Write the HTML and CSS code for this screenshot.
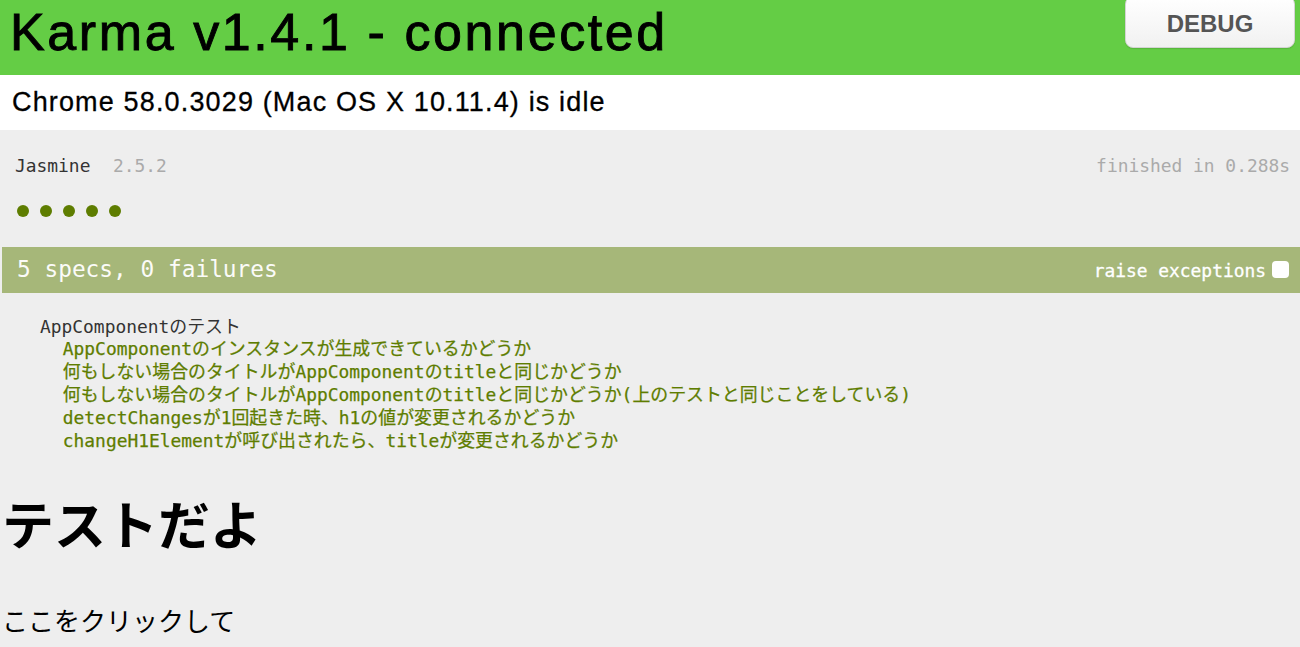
FILE: index.html
```html
<!DOCTYPE html>
<html lang="ja">
<head>
<meta charset="utf-8">
<title>Karma</title>
<link rel="stylesheet" href="styles.css">
</head>
<body>
<header class="banner">
  <h1 class="title">Karma v1.4.1 - connected</h1>
  <button class="debug">DEBUG</button>
</header>
<div class="browsers">Chrome 58.0.3029 (Mac OS X 10.11.4) is idle</div>
<main class="context">
  <section class="reporter">
    <div class="jas-banner">
      <div class="jas-title"><span class="jas-name">Jasmine</span><span class="jas-version">2.5.2</span></div>
      <span class="jas-duration">finished in 0.288s</span>
    </div>
    <ul class="dots">
      <li class="dot"></li>
      <li class="dot"></li>
      <li class="dot"></li>
      <li class="dot"></li>
      <li class="dot"></li>
    </ul>
    <div class="bar">
      <span class="bar-text">5 specs, 0 failures</span>
      <span class="exceptions">raise exceptions<span class="check"></span></span>
    </div>
    <ul class="summary">
      <li class="suite">AppComponentのテスト
        <ul class="specs">
          <li class="spec">AppComponentのインスタンスが生成できているかどうか</li>
          <li class="spec">何もしない場合のタイトルがAppComponentのtitleと同じかどうか</li>
          <li class="spec">何もしない場合のタイトルがAppComponentのtitleと同じかどうか(上のテストと同じことをしている)</li>
          <li class="spec">detectChangesが1回起きた時、h1の値が変更されるかどうか</li>
          <li class="spec">changeH1Elementが呼び出されたら、titleが変更されるかどうか</li>
        </ul>
      </li>
    </ul>
  </section>
  <h1 class="page-title">テストだよ</h1>
  <p class="click">ここをクリックして</p>
</main>
</body>
</html>
```
FILE: styles.css
```css
html, body {
  margin: 0;
  padding: 0;
}
body {
  background: #eeeeee;
  font-family: "Liberation Sans", "Noto Sans CJK JP", sans-serif;
  color: #000;
  width: 1300px;
  height: 647px;
  overflow: hidden;
}
.banner {
  display: flex;
  justify-content: space-between;
  align-items: flex-start;
  height: 75px;
  background: #64cd45;
  padding: 0 5px 0 10px;
  box-sizing: border-box;
}
.title {
  margin: 0;
  font-family: "Liberation Sans", sans-serif;
  font-weight: normal;
  font-size: 52px;
  line-height: 64px;
  letter-spacing: 2.6px;
  -webkit-text-stroke: 0.9px #000;
  color: #000;
}
.debug {
  width: 170px;
  height: 52px;
  margin-top: -4px;
  padding: 4px 0 0;
  border: 1px solid #d4d4d4;
  border-radius: 8px;
  background: linear-gradient(#ffffff, #f1f1f1);
  box-shadow: 0 1px 1px rgba(0, 0, 0, 0.12);
  font-family: "Liberation Sans", sans-serif;
  font-weight: bold;
  font-size: 24px;
  color: #555555;
  box-sizing: border-box;
}
.browsers {
  background: #ffffff;
  height: 55px;
  font-size: 27px;
  line-height: 55px;
  letter-spacing: 1.15px;
  -webkit-text-stroke: 0.3px #000;
  padding-left: 12px;
}
.reporter {
  font-family: "DejaVu Sans Mono", "Noto Sans CJK JP", monospace;
  color: #333333;
  padding-top: 24px;
}
.jas-banner {
  display: flex;
  justify-content: space-between;
  padding: 0 10px 0 15px;
  font-size: 17.9px;
  line-height: 23px;
}
.jas-version,
.jas-duration {
  color: #aaaaaa;
}
.jas-version {
  margin-left: 22.5px;
}
.dots {
  display: flex;
  gap: 11px;
  list-style: none;
  margin: 28px 0 0;
  padding: 0 0 0 17px;
}
.dot {
  width: 12px;
  height: 12px;
  border-radius: 50%;
  background: #5e7d00;
}
.bar {
  display: flex;
  justify-content: space-between;
  align-items: baseline;
  height: 46px;
  margin: 30px 0 0 2px;
  padding: 0 11px 0 15px;
  background: #a6b779;
  color: #fbfbf8;
  font-size: 22.8px;
  line-height: 44px;
}
.exceptions {
  font-size: 17.9px;
  line-height: 44px;
  color: #ffffff;
  -webkit-text-stroke: 0.3px #ffffff;
}
.check {
  display: inline-block;
  width: 17px;
  height: 17px;
  margin-left: 6px;
  border-radius: 4px;
  background: #ffffff;
  vertical-align: -1px;
}
.summary {
  list-style: none;
  margin: 22.7px 0 0;
  padding: 0 0 0 40px;
  font-size: 17.9px;
  line-height: 22.8px;
}
.specs {
  list-style: none;
  margin: 0;
  padding: 0 0 0 22.8px;
}
.spec {
  color: #5e7d00;
  -webkit-text-stroke: 0.25px #5e7d00;
}
.page-title {
  margin: 41px 0 0;
  padding-left: 2px;
  font-family: "Noto Sans CJK JP", sans-serif;
  font-weight: bold;
  font-size: 52px;
  line-height: 60px;
}
.click {
  margin: 52px 0 0;
  padding-left: 2px;
  font-family: "Noto Sans CJK JP", sans-serif;
  font-size: 26px;
  line-height: 30px;
}
```
